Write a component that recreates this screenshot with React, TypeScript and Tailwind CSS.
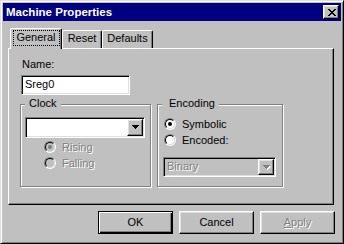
const font = "font-['Liberation_Sans',Arial,sans-serif]";
const raised =
  "border border-t-white border-l-white border-r-black border-b-black shadow-[inset_-1px_-1px_#808080,inset_1px_1px_#dfdfdf]";
const sunken =
  "border border-t-[#808080] border-l-[#808080] border-r-white border-b-white shadow-[inset_1px_1px_#000,inset_-1px_-1px_#dfdfdf]";
const grayText = "text-[#808080] [text-shadow:1px_1px_0_#fff]";

function CloseX() {
  return (
    <svg width="8" height="7" viewBox="0 0 8 7" shapeRendering="crispEdges">
      <path
        d="M0 0h2v1h-2zM6 0h2v1h-2zM1 1h2v1h-2zM5 1h2v1h-2zM2 2h4v1h-4zM3 3h2v1h-2zM2 4h4v1h-4zM1 5h2v1h-2zM5 5h2v1h-2zM0 6h2v1h-2zM6 6h2v1h-2z"
        fill="#000"
      />
    </svg>
  );
}

function Arrow({ disabled }: { disabled?: boolean }) {
  return (
    <svg width="8" height="5" viewBox="0 0 8 5" shapeRendering="crispEdges">
      {disabled && <path d="M1 1h7v1h-1v1h-1v1h-1v1h-1v-1h-1v-1h-1v-1h-1z" fill="#fff" />}
      <path
        d="M0 0h7v1h-1v1h-1v1h-1v1h-1v-1h-1v-1h-1v-1h-1z"
        fill={disabled ? "#808080" : "#000"}
      />
    </svg>
  );
}

function Combo({ width, height, text, disabled }: { width: string; height: string; text?: string; disabled?: boolean }) {
  return (
    <div className={`${width} ${height} ${sunken} ${disabled ? "bg-[#c0c0c0]" : "bg-white"} flex p-[1px]`}>
      <div className={`flex-1 pl-[2px] leading-[15px] ${disabled ? grayText : "text-black"}`}>{text}</div>
      <div className={`${raised} bg-[#c0c0c0] w-[16px] h-full flex items-center justify-center pl-[1px]`}>
        <Arrow disabled={disabled} />
      </div>
    </div>
  );
}

function Radio({ label, checked, disabled }: { label: string; checked?: boolean; disabled?: boolean }) {
  return (
    <div className="flex h-[16px] items-center">
      <span className="block h-[12px] w-[12px] rounded-full border border-t-[#808080] border-l-[#808080] border-r-white border-b-white">
        <span
          className={`flex h-full w-full items-center justify-center rounded-full border border-t-black border-l-black border-r-[#dfdfdf] border-b-[#dfdfdf] ${
            disabled ? "bg-[#c0c0c0]" : "bg-white"
          }`}
        >
          {checked && <span className={`block h-[4px] w-[4px] rounded-full ${disabled ? "bg-[#808080]" : "bg-black"}`} />}
        </span>
      </span>
      <span className={`ml-[6px] leading-[13px] ${disabled ? grayText : ""}`}>{label}</span>
    </div>
  );
}

function Group({ title, width, labelPad, children }: { title: string; width: string; labelPad: string; children: React.ReactNode }) {
  return (
    <div className={`relative ${width} h-[83px] border border-[#808080] shadow-[inset_1px_1px_#fff,1px_1px_#fff]`}>
      <span className={`absolute -top-[8px] left-[4px] bg-[#c0c0c0] leading-[13px] ${labelPad}`}>{title}</span>
      {children}
    </div>
  );
}

export default function App() {
  return (
    <div className={`${font} text-[11px] text-black w-[344px] h-[244px] bg-[#c0c0c0] border border-t-[#dfdfdf] border-l-[#dfdfdf] border-r-black border-b-black shadow-[inset_1px_1px_#fff,inset_-1px_-1px_#808080] p-[2px] flex flex-col`}>
      {/* title bar */}
      <div className="h-[18px] bg-[#000080] flex items-center justify-between pl-[3px] pr-[2px]">
        <span className="text-white font-bold text-[11.5px] leading-[14px]">Machine Properties</span>
        <button className={`${raised} bg-[#c0c0c0] w-[16px] h-[14px] flex items-center justify-center pl-[1px]`}>
          <CloseX />
        </button>
      </div>

      {/* tabs */}
      <div className="relative z-10 mt-[7px] ml-[7px] h-[21px] flex items-end">
        <div className="h-[21px] w-[52px] bg-[#c0c0c0] border-t border-l border-r border-t-white border-l-white border-r-black rounded-t-[2px] shadow-[inset_-1px_0_#808080] flex justify-center pt-[1px]">
          <span className="h-[16px] w-[47px] border border-dotted border-black leading-[13px] text-center">General</span>
        </div>
        <div className="mb-[1px] h-[18px] w-[40px] border-t border-l border-r border-t-white border-l-white border-r-black rounded-t-[2px] shadow-[inset_-1px_0_#808080] text-center leading-[15px]">
          Reset
        </div>
        <div className="mb-[1px] h-[18px] w-[51px] border-t border-l border-r border-t-white border-l-white border-r-black rounded-t-[2px] shadow-[inset_-1px_0_#808080] text-center leading-[15px]">
          Defaults
        </div>
      </div>

      {/* panel */}
      <div className="-mt-[1px] ml-[5px] w-[326px] h-[157px] border border-t-white border-l-white border-r-black border-b-black shadow-[inset_-1px_-1px_#808080] flex flex-col">
        <div className="ml-[13px] mt-[9px] leading-[13px]">Name:</div>
        <div className={`mt-[4px] ml-[12px] w-[109px] h-[20px] bg-white ${sunken} pl-[3px] leading-[17px]`}>Sreg0</div>

        <div className="mt-[9px] ml-[11px] flex gap-[6px]">
          <Group title="Clock" width="w-[131px]" labelPad="px-[4px]">
            <div className="mt-[12px] ml-[4px]">
              <Combo width="w-[120px]" height="h-[21px]" />
            </div>
            <div className="mt-[1px] ml-[23px]">
              <Radio label="Rising" checked disabled />
              <Radio label="Falling" disabled />
            </div>
          </Group>
          <Group title="Encoding" width="w-[126px]" labelPad="pl-[7px] pr-[4px]">
            <div className="mt-[11px] ml-[6px]">
              <Radio label="Symbolic" checked />
              <Radio label="Encoded:" />
            </div>
            <div className="mt-[9px] ml-[5px]">
              <Combo width="w-[113px]" height="h-[20px]" text="Binary" disabled />
            </div>
          </Group>
        </div>
      </div>

      {/* buttons */}
      <div className="mt-[6px] pr-[6px] flex justify-end gap-[6px]">
        <button className="w-[75px] h-[23px] border border-black shadow-[inset_1px_1px_#fff,inset_-1px_-1px_#000,inset_-2px_-2px_#808080] flex items-center justify-center">
          OK
        </button>
        <button className={`w-[75px] h-[23px] ${raised} flex items-center justify-center`}>Cancel</button>
        <button className={`w-[75px] h-[23px] ${raised} flex items-center justify-center ${grayText}`}>
          <span>
            <span className="underline">A</span>pply
          </span>
        </button>
      </div>
    </div>
  );
}
